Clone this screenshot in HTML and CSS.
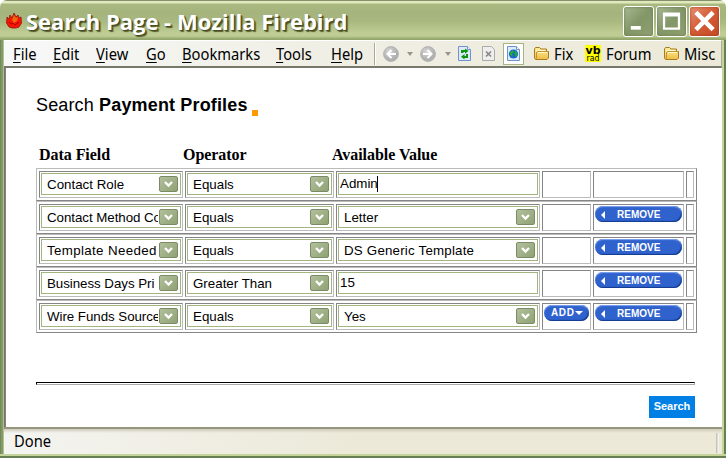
FILE: index.html
```html
<!DOCTYPE html>
<html lang="en">
<head>
<meta charset="utf-8">
<title>Search Page</title>
<link rel="stylesheet" href="styles.css">
</head>
<body>
<svg class="defs" width="0" height="0">
  <defs>
    <linearGradient id="gold" x1="0" y1="0" x2="0" y2="1"><stop offset="0" stop-color="#fff0a0"/><stop offset="1" stop-color="#efbd45"/></linearGradient>
    <radialGradient id="silver" cx=".4" cy=".35"><stop offset="0" stop-color="#d8d8d8"/><stop offset="1" stop-color="#b0b0b0"/></radialGradient>
    <symbol id="folder" viewBox="0 0 17 15"><path d="M1.5 3 2.5 1.5H6.500L8 3h5.500v2.500H15.500V12l-1.500 1.500H2.500L1.500 12Z" fill="url(#gold)" stroke="#a87c1c"/><path d="M3.500 12.500V6.500L5 5.500h10.500" fill="none" stroke="#bd932f"/><path d="M3 4.500h9M5 6.500h9" stroke="#fff9cb"/></symbol>
    <symbol id="page" viewBox="0 0 13 15"><path d="M.5.500h9l3 3v11H.500Z" fill="#dceafb" stroke="#6f93cf"/><path d="M9.500.500v3h3" fill="#fff" stroke="#6f93cf"/></symbol>
  </defs>
</svg>
<div class="window">
  <header class="titlebar">
    <svg class="flame" viewBox="0 0 16 16"><path d="M1 4 3 6 4 2 6 5 8 0 10 4 12 2 13 5 15 4 15.500 10 13 14 10 15H6L3 14 .5 10Z" fill="#f51505" stroke="#971808" stroke-width=".8"/><path d="M8 2 10 5 12 4 11 8 8 10 6 7Z" fill="#ed6810"/><path d="M3 9 5 11 7 10 9 12 13 9" fill="none" stroke="#b50000"/></svg>
    <h1 class="caption"><span>Search Page - Mozilla Firebird</span></h1>
    <div class="controls">
      <svg class="control" viewBox="0 0 31 32"><rect x="7" y="21" width="11" height="4" fill="#fff"/></svg>
      <svg class="control" viewBox="0 0 31 32"><path d="M6 6h19v19H6Zm2.500 4.500v12h14v-12Z" fill="#fff" fill-rule="evenodd"/></svg>
      <svg class="control close" viewBox="0 0 31 32"><path d="m6 6 19 19M25 6 6 25" stroke="#fff" stroke-width="5"/></svg>
    </div>
  </header>
  <nav class="toolbar">
    <div class="menu">
      <span class="item file"><span><u>F</u>ile</span></span>
      <span class="item edit"><span><u>E</u>dit</span></span>
      <span class="item view"><span><u>V</u>iew</span></span>
      <span class="item go"><span><u>G</u>o</span></span>
      <span class="item marks"><span><u>B</u>ookmarks</span></span>
      <span class="item tools"><span><u>T</u>ools</span></span>
      <span class="item help"><span><u>H</u>elp</span></span>
    </div>
    <div class="nav-buttons">
      <svg width="16" height="16" viewBox="0 0 16 16"><circle cx="8" cy="8" r="7.500" fill="url(#silver)" stroke="#aaa" stroke-width=".7"/><path d="M13 8H5M8.500 4 4.500 8l4 4" fill="none" stroke="#fff" stroke-width="2"/></svg>
      <svg class="drop" width="6" height="4" viewBox="0 0 6 4"><path d="M0 0h6L3 4Z" fill="#95958b"/></svg>
      <svg width="16" height="16" viewBox="0 0 16 16"><circle cx="8" cy="8" r="7.500" fill="url(#silver)" stroke="#aaa" stroke-width=".7"/><path d="M3 8h8M7.500 4l4 4-4 4" fill="none" stroke="#fff" stroke-width="2"/></svg>
      <svg class="drop" width="6" height="4" viewBox="0 0 6 4"><path d="M0 0h6L3 4Z" fill="#95958b"/></svg>
      <svg class="reload" width="13" height="15" viewBox="0 0 13 15"><use href="#page"/><path d="M3 7V4h4V2.500L10.500 5 7 7.800V6H5.500v1Z" fill="#0a960d"/><path d="M10 8v4H6.500v1.500L3 10.800 6.500 8v2H8V8Z" fill="#0a960d"/></svg>
      <svg class="stop" width="13" height="15" viewBox="0 0 13 15"><path d="M.5.500h9l3 3v11H.500Z" fill="#eeeeec" stroke="#aaa"/><path d="m4 5.500 5 5m0-5-5 5" stroke="#888" stroke-width="1.700"/></svg>
      <span class="home"><svg width="13" height="15" viewBox="0 0 13 15"><use href="#page"/><circle cx="6.500" cy="8" r="4.600" fill="#1768cf"/><path d="M3 6 6 4l1 2-2 2 1 3-3-2Zm5-1 2 1 .5 3-2 2-1-3Z" fill="#24aa35"/></svg></span>
    </div>
    <div class="bookmarks">
      <svg width="17" height="15"><use href="#folder"/></svg><span class="item fix"><span>Fix</span></span>
      <svg class="vbrad" width="16" height="17" viewBox="0 0 16 17"><rect width="16" height="17" fill="#ff0"/><text class="vb" x="0.500" y="8.500" textLength="15" lengthAdjust="spacingAndGlyphs">vb</text><text class="rad" x="1.500" y="15.800" textLength="13" lengthAdjust="spacingAndGlyphs">rad</text></svg><span class="item forum"><span>Forum</span></span>
      <svg width="17" height="15"><use href="#folder"/></svg><span class="item misc"><span>Misc</span></span>
    </div>
  </nav>
  <main class="page">
    <h2 class="heading"><span class="heading-text">Search <b>Payment Profiles</b></span><span class="dot"></span></h2>
    <div class="columns"><span>Data Field</span><span>Operator</span><span>Available Value</span></div>
    <div class="criteria">
      <div class="row">
        <div class="cell"><div class="select"><span>Contact Role</span><svg class="arrow"><path d="M6 5l3.500 3.500L13 5" /></svg></div></div>
        <div class="cell"><div class="select"><span>Equals</span><svg class="arrow"><path d="M6 5l3.500 3.500L13 5" /></svg></div></div>
        <div class="cell"><div class="input">Admin<span class="caret"></span></div></div>
        <div class="cell"></div><div class="cell"></div><div class="cell"></div>
      </div>
      <div class="row">
        <div class="cell"><div class="select tight"><span>Contact Method Co</span><svg class="arrow"><path d="M6 5l3.500 3.500L13 5" /></svg></div></div>
        <div class="cell"><div class="select"><span>Equals</span><svg class="arrow"><path d="M6 5l3.500 3.500L13 5" /></svg></div></div>
        <div class="cell"><div class="select"><span>Letter</span><svg class="arrow"><path d="M6 5l3.500 3.500L13 5" /></svg></div></div>
        <div class="cell"></div><div class="cell"><div class="pill remove"><i></i><span>REMOVE</span></div></div><div class="cell"></div>
      </div>
      <div class="row">
        <div class="cell"><div class="select wide"><span>Template Needed</span><svg class="arrow"><path d="M6 5l3.500 3.500L13 5" /></svg></div></div>
        <div class="cell"><div class="select"><span>Equals</span><svg class="arrow"><path d="M6 5l3.500 3.500L13 5" /></svg></div></div>
        <div class="cell"><div class="select template"><span>DS Generic Template</span><svg class="arrow"><path d="M6 5l3.500 3.500L13 5" /></svg></div></div>
        <div class="cell"></div><div class="cell"><div class="pill remove"><i></i><span>REMOVE</span></div></div><div class="cell"></div>
      </div>
      <div class="row">
        <div class="cell"><div class="select tight"><span>Business Days Pri</span><svg class="arrow"><path d="M6 5l3.500 3.500L13 5" /></svg></div></div>
        <div class="cell"><div class="select"><span>Greater Than</span><svg class="arrow"><path d="M6 5l3.500 3.500L13 5" /></svg></div></div>
        <div class="cell"><div class="input">15</div></div>
        <div class="cell"></div><div class="cell"><div class="pill remove"><i></i><span>REMOVE</span></div></div><div class="cell"></div>
      </div>
      <div class="row">
        <div class="cell"><div class="select tight"><span>Wire Funds Source</span><svg class="arrow"><path d="M6 5l3.500 3.500L13 5" /></svg></div></div>
        <div class="cell"><div class="select"><span>Equals</span><svg class="arrow"><path d="M6 5l3.500 3.500L13 5" /></svg></div></div>
        <div class="cell"><div class="select"><span>Yes</span><svg class="arrow"><path d="M6 5l3.500 3.500L13 5" /></svg></div></div>
        <div class="cell"><div class="pill add"><span>ADD</span><i></i></div></div><div class="cell"><div class="pill remove"><i></i><span>REMOVE</span></div></div><div class="cell"></div>
      </div>
    </div>
    <div class="rule"></div>
    <div class="search">Search</div>
  </main>
  <footer class="status"><span class="item"><span>Done</span></span></footer>
</div>
</body>
</html>
```
FILE: styles.css
```css
* { box-sizing: border-box; }
body { margin: 0; overflow: hidden; background: #fff; }
svg { display: block; flex: none; }
.defs { position: absolute; }
.window {
  width: 726px; height: 458px; display: flex; flex-direction: column;
  padding: 0 4px 4px; border-radius: 7px 7px 0 0;
  background:
    linear-gradient(90deg, #75885f 0 1px, #819a69 1px 3px, #b2c38a 3px 4px, transparent 4px 722px, #c5d49a 722px 724px, #668052 724px 726px) 0 40px / 726px 414px no-repeat,
    linear-gradient(#c5d49a 0 2px, #668052 2px 4px) 0 454px / 726px 4px no-repeat,
    linear-gradient(#84916a 0 1px, #e0e8bd 1px 3px, #a9b980 4px, #a5b47c 14px, #a9b980 22px, #bfcd94 33px, #bfcd94 36px, #93a66c 39px, #93a66c 40px);
}
.titlebar { height: 40px; flex: none; display: flex; align-items: flex-start; }
.flame { width: 16px; height: 16px; margin: 13px 0 0 2px; }
.caption { width: 597px; margin: 5px 0 0 4px; font: bold 22px/32px "Open Sans", sans-serif; color: #fff; text-shadow: 1px 1px 1px #444b22, 2px 2px 1px #59612f; white-space: nowrap; }
.caption span { display: inline-block; }
.controls { display: flex; gap: 2px; margin-top: 6px; }
.control { width: 31px; height: 31px; border: 1px solid #fff; border-radius: 3px; background: linear-gradient(135deg, #a8b993, #829667 50%, #90a070); box-shadow: inset 0 0 3px #64784e; }
.close { background: linear-gradient(135deg, #e59375, #d45a35 50%, #c34c24); box-shadow: inset 0 0 3px #a23a1c; }
.toolbar { height: 28px; flex: none; display: flex; align-items: center; background: linear-gradient(90deg, #f7f8f8, #f0efe5 45%, #ece9d8); border-top: 1px solid #fff; border-bottom: 2px solid #77776a; border-right: 1px solid #aaa99d; }
.item { display: block; font: 16px/22px "Noto Sans", sans-serif; color: #000; white-space: nowrap; }
.item > span { display: inline-block; transform: scaleX(.92); transform-origin: 0 50%; }
.item u { text-decoration-thickness: 1px; text-underline-offset: 2px; }
.menu { display: flex; flex: none; width: 370px; padding-left: 8.700px; }
.file { width: 40px; } .edit { width: 43px; } .view { width: 50px; } .go { width: 36px; } .marks { width: 94px; } .tools { width: 55px; } .help { width: 40px; }
.nav-buttons { display: flex; flex: none; align-items: center; height: 22px; width: 150px; padding-left: 8px; border-left: 1px solid #aaa99a; box-shadow: inset 1px 0 #fff; }
.drop { margin: 0 7px 0 8px; }
.nav-buttons .drop ~ .drop { margin-left: 9px; }
.stop { margin-left: 11px; }
.home { display: flex; align-items: center; justify-content: center; width: 21px; height: 22px; margin-left: 8px; flex: none; border: 1px solid #a5b684; background: #fff; }
.bookmarks { display: flex; align-items: center; padding-left: 9px; }
.fix { width: 31px; margin-left: 4px; } .forum { width: 52px; margin-left: 5px; } .misc { width: 32px; margin-left: 4px; }
.forum { margin-right: 5px; }
.vbrad text { fill: #000; font-family: "DejaVu Sans", sans-serif; }
.vbrad .vb { font-size: 11px; font-weight: bold; }
.vbrad .rad { font-size: 9px; }
.page { flex: 1; min-height: 0; padding: 26px 27px 0 31px; background: #fff; border-left: 1px solid #74746a; width: 718px; box-shadow: inset 1px 0 #85857c; }
.heading { display: flex; margin: 0; height: 22px; font: 18px/22px "Liberation Sans", sans-serif; }
.heading-text { width: 216px; white-space: nowrap; letter-spacing: .15px; }
.dot { width: 6px; height: 6px; margin-top: 16px; background: #f90; }
.columns { display: grid; grid-template-columns: 144px 149px 1fr; padding-left: 3px; margin-top: 30px; height: 22px; font: bold 16px/18px "Liberation Serif", serif; letter-spacing: -.05px; }
.row { display: grid; grid-template-columns: 144px 149px 204px 49px 91px 8px; gap: 2px; width: 661px; height: 33px; padding: 2px; border: 1px solid; border-color: #bbb #858585 #858585 #bbb; }
.cell { height: 27px; padding: 1px; border: 1px solid; border-color: #858585 #bbb #bbb #858585; }
.select, .input { height: 22px; border: 1px solid #a2b581; font: 13.330px/20px "Liberation Sans", sans-serif; white-space: nowrap; }
.select { display: flex; padding: 2px 2px 0 5px; }
.select.wide { letter-spacing: .35px; }
.select.template { letter-spacing: .2px; }
.select.tight { letter-spacing: -.05px; }
.select span { flex: 1; min-width: 0; overflow: hidden; height: 17px; line-height: 17px; }
.arrow { width: 19px; height: 16px; margin-left: 1px; border: 1px solid #7b8c65; border-radius: 2px; background: linear-gradient(135deg, #b2bf9c, #8fa274); }
.arrow path { fill: none; stroke: #fff; stroke-width: 2.300; transform: translate(-1px, 0); }
.input { padding-left: 1px; display: flex; align-items: flex-start; line-height: 19px; }
.caret { width: 1px; height: 16px; margin-top: 2px; margin-left: -1px; background: #000; }
.pill { display: flex; align-items: center; height: 16px; border-radius: 8px; background: #2f62cd; box-shadow: inset 0 1px 1px #80a4ef, inset -1px -1px 1px #123b8e; color: #fff; font: bold 10px/16px "Liberation Sans", sans-serif; }
.pill span { padding-top: 1px; }
.remove { width: 87px; }
.remove i { width: 0; height: 0; margin: 1px 12px 0 6px; border: solid transparent; border-width: 4px 4px 4px 0; border-right-color: #fff; }
.remove span { margin-top: 1px; }
.add { width: 45px; padding-left: 7px; letter-spacing: .6px; }
.add span { padding-top: 0; }
.add i { width: 0; height: 0; margin-left: 1px; border: solid transparent; border-width: 4px 4px 0; border-top-color: #fff; }
.rule { width: 659px; height: 3px; margin-top: 49px; border: 1px solid; border-color: #000 #aaa #aaa #000; }
.search { width: 46px; height: 22px; margin: 11px 0 0 613px; background: #007fe5; color: #fff; text-align: center; font: bold 11px/21px "Liberation Sans", sans-serif; }
.status { height: 27px; flex: none; padding: 1px 0 0 10px; border-top: 2px solid #96967f; background: linear-gradient(90deg, #bab8aa, #fff) 712px 4px / 3px 20px no-repeat, linear-gradient(#cecbbb, transparent 4px), linear-gradient(90deg, #f4f4f1, #ece9d8 50%); }
```
